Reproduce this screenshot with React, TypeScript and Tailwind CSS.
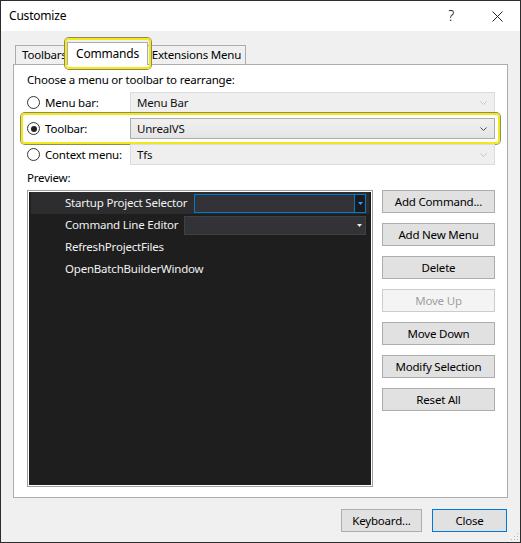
// @ts-nocheck
import React from "react";

const FONT = { fontFamily: '"Noto Sans", "Segoe UI", Roboto, sans-serif' };

function Chevron({ disabled }: { disabled?: boolean }) {
  return (
    <svg width="7" height="4" viewBox="0 0 7 4" className="shrink-0">
      <polyline
        points="0.5,0.5 3.5,3.5 6.5,0.5"
        fill="none"
        stroke={disabled ? "#c4c4c4" : "#4a4a4a"}
        strokeWidth="1"
      />
    </svg>
  );
}

function Radio({ checked }: { checked?: boolean }) {
  return (
    <span className="w-[13px] h-[13px] rounded-full border border-[#333] bg-white flex items-center justify-center shrink-0">
      {checked && <span className="w-[6px] h-[6px] rounded-full bg-[#222]" />}
    </span>
  );
}

function Combo({ value, disabled }: { value: string; disabled?: boolean }) {
  return (
    <div
      className={
        "flex-1 h-[21px] flex items-center pl-[6px] pr-[7px] border " +
        (disabled
          ? "bg-[#efefef] border-[#dcdcdc]"
          : "bg-gradient-to-b from-[#f0f0f0] to-[#e5e5e5] border-[#acacac]")
      }
    >
      <span className="flex-1 text-[#111]">{value}</span>
      <Chevron disabled={disabled} />
    </div>
  );
}

function OptionRow({
  label,
  value,
  checked,
  disabled,
  highlight,
}: {
  label: string;
  value: string;
  checked?: boolean;
  disabled?: boolean;
  highlight?: boolean;
}) {
  return (
    <div className="relative flex items-center h-[21px] mr-[12px]">
      <div className="w-[103px] flex items-center gap-[5px] shrink-0">
        <Radio checked={checked} />
        <span>{label}</span>
      </div>
      <Combo value={value} disabled={disabled} />
      {highlight && (
        <div className="absolute -left-[6px] -top-[5px] -right-[5px] -bottom-[5px] rounded-[4px] border-2 border-[#f4e81a] shadow-[0_0_0_1px_#8f8c5c]" />
      )}
    </div>
  );
}

function SideButton({ children, disabled }: { children: React.ReactNode; disabled?: boolean }) {
  return (
    <div
      className={
        "h-[23px] flex items-center justify-center border " +
        (disabled
          ? "bg-[#f4f4f4] border-[#cccccc] text-[#a0a0a0]"
          : "bg-[#e1e1e1] border-[#adadad] text-black")
      }
    >
      {children}
    </div>
  );
}

function DarkArrow({ color }: { color: string }) {
  return (
    <svg width="5" height="3" viewBox="0 0 5 3">
      <polygon points="0,0 5,0 2.5,3" fill={color} />
    </svg>
  );
}

function Preview() {
  return (
    <div className="w-[346px] h-[297px] border border-[#a0a0a0] bg-white p-[1px] shrink-0">
      <div className="w-full h-full bg-[#1e1e1e] px-[2px] text-[#f1f1f1]">
        <div className="h-[22px] bg-[#2d2d30] flex items-center pl-[34px] pr-[3px]">
          <span className="whitespace-nowrap">Startup Project Selector</span>
          <div className="flex-1 ml-[7px] h-[19px] border border-[#007acc] bg-[#333337] flex justify-end">
            <div className="w-[11px] h-full border-l border-[#007acc] bg-[#1b1b1c] flex items-center justify-center">
              <DarkArrow color="#3399ff" />
            </div>
          </div>
        </div>
        <div className="h-[22px] flex items-center pl-[34px] pr-[3px]">
          <span className="whitespace-nowrap">Command Line Editor</span>
          <div className="flex-1 ml-[6px] h-[19px] border border-[#3f3f46] bg-[#333337] flex justify-end">
            <div className="w-[12px] h-full flex items-center justify-center">
              <DarkArrow color="#f1f1f1" />
            </div>
          </div>
        </div>
        <div className="h-[22px] flex items-center pl-[34px]">RefreshProjectFiles</div>
        <div className="h-[22px] flex items-center pl-[34px]">OpenBatchBuilderWindow</div>
      </div>
    </div>
  );
}

export default function App() {
  return (
    <div
      style={FONT}
      className="relative w-[521px] h-[543px] border border-[#2c2c2c] bg-[#f0f0f0] flex flex-col overflow-hidden text-[11.5px] leading-[16px] tracking-[-0.2px] text-black"
    >
      {/* title bar */}
      <div className="h-[30px] bg-white flex items-center shrink-0">
        <span className="pl-[8px] text-[12px]">Customize</span>
        <div className="ml-auto flex h-full">
          <div className="w-[46px] flex items-center justify-center text-[14px] font-light">?</div>
          <div className="w-[46px] flex items-center justify-center">
            <svg width="11" height="11" viewBox="0 0 11 11">
              <path d="M0.5 0.5 L10.5 10.5 M10.5 0.5 L0.5 10.5" stroke="#222" strokeWidth="1" />
            </svg>
          </div>
        </div>
      </div>

      <div className="flex-1 flex flex-col px-[12px]">
        {/* tabs */}
        <div className="mt-[11px] h-[22px] flex items-end pl-[2px] relative z-10">
          <div className="w-[54px] h-[19px] border border-b-0 border-[#acacac] bg-[#f0f0f0] pl-[6px] flex items-center whitespace-nowrap overflow-hidden">
            Toolbars
          </div>
          <div className="relative -ml-[2px] w-[81px] h-[23px] -mb-[1px] border border-b-0 border-[#acacac] bg-white flex items-center justify-center z-10 text-[12px]">
            Commands
            <div className="absolute -left-[3px] -top-[5px] -right-[4px] bottom-[-4px] rounded-[4px] border-2 border-[#f4e81a] shadow-[0_0_0_1px_#8f8c5c]" />
          </div>
          <div className="w-[98px] h-[19px] border border-l-0 border-b-0 border-[#acacac] bg-[#f0f0f0] flex items-center justify-center whitespace-nowrap">
            Extensions Menu
          </div>
        </div>

        {/* panel */}
        <div className="h-[434px] border border-[#acacac] bg-white pl-[13px] pt-[7px] flex flex-col">
          <div>Choose a menu or toolbar to rearrange:</div>
          <div className="mt-[4px] flex flex-col gap-[5px]">
            <OptionRow label="Menu bar:" value="Menu Bar" disabled />
            <OptionRow label="Toolbar:" value="UnrealVS" checked highlight />
            <OptionRow label="Context menu:" value="Tfs" disabled />
          </div>
          <div className="mt-[5px]">Preview:</div>
          <div className="mt-[4px] flex gap-[9px]">
            <Preview />
            <div className="w-[113px] flex flex-col gap-[10px]">
              <SideButton>Add Command...</SideButton>
              <SideButton>Add New Menu</SideButton>
              <SideButton>Delete</SideButton>
              <SideButton disabled>Move Up</SideButton>
              <SideButton>Move Down</SideButton>
              <SideButton>Modify Selection</SideButton>
              <SideButton>Reset All</SideButton>
            </div>
          </div>
        </div>

        {/* bottom buttons */}
        <div className="mt-[11px] flex justify-end gap-[10px] pr-[1px]">
          <div className="w-[81px] h-[23px] bg-[#e1e1e1] border border-[#adadad] flex items-center justify-center">
            Keyboard...
          </div>
          <div className="w-[75px] h-[23px] bg-[#e1e1e1] border border-[#0078d7] flex items-center justify-center">
            Close
          </div>
        </div>
      </div>

      {/* size grip */}
      <svg className="absolute right-[1px] bottom-[1px]" width="10" height="10" viewBox="0 0 10 10">
        {[
          [8, 2], [8, 5], [5, 5], [8, 8], [5, 8], [2, 8],
        ].map(([x, y], i) => (
          <rect key={i} x={x} y={y} width="1" height="1" fill="#b8b8b8" />
        ))}
      </svg>
    </div>
  );
}
